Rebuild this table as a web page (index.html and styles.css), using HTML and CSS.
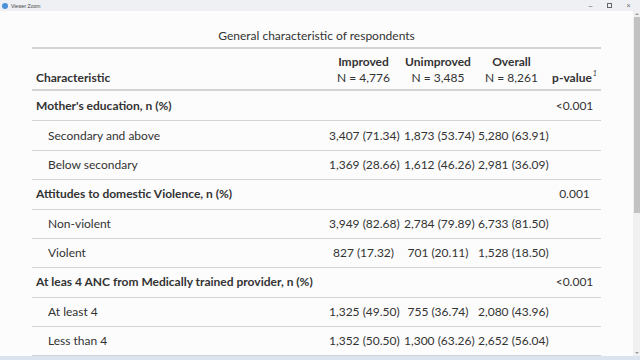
FILE: index.html
```html
<!DOCTYPE html>
<html>
<head>
<meta charset="utf-8">
<link rel="stylesheet" href="styles.css">
</head>
<body>
<div class="window">
  <div class="titlebar">
    <span class="app-icon"></span>
    <span class="app-title">Viewer Zoom</span>
    <span class="spacer"></span>
    <span class="ctrl">&#8211;</span>
    <span class="ctrl restore"></span>
    <span class="ctrl">&#215;</span>
  </div>
  <div class="main">
    <div class="content">
      <table class="gt">
        <caption>General characteristic of respondents</caption>
        <colgroup>
          <col class="c-label">
          <col class="c-imp">
          <col class="c-unimp">
          <col class="c-all">
          <col class="c-p">
        </colgroup>
        <thead>
          <tr>
            <th class="left">Characteristic</th>
            <th>Improved<br><span class="n">N = 4,776</span></th>
            <th>Unimproved<br><span class="n">N = 3,485</span></th>
            <th>Overall<br><span class="n">N = 8,261</span></th>
            <th>p-value<sup class="mark">1</sup></th>
          </tr>
        </thead>
        <tbody>
          <tr class="grp"><td class="left">Mother's education, n (%)</td><td></td><td></td><td></td><td>&lt;0.001</td></tr>
          <tr><td class="left sub">Secondary and above</td><td>3,407 (71.34)</td><td>1,873 (53.74)</td><td>5,280 (63.91)</td><td></td></tr>
          <tr><td class="left sub">Below secondary</td><td>1,369 (28.66)</td><td>1,612 (46.26)</td><td>2,981 (36.09)</td><td></td></tr>
          <tr class="grp"><td class="left">Attitudes to domestic Violence, n (%)</td><td></td><td></td><td></td><td>0.001</td></tr>
          <tr><td class="left sub">Non-violent</td><td>3,949 (82.68)</td><td>2,784 (79.89)</td><td>6,733 (81.50)</td><td></td></tr>
          <tr><td class="left sub">Violent</td><td>827 (17.32)</td><td>701 (20.11)</td><td>1,528 (18.50)</td><td></td></tr>
          <tr class="grp"><td class="left">At leas 4 ANC from Medically trained provider, n (%)</td><td></td><td></td><td></td><td>&lt;0.001</td></tr>
          <tr><td class="left sub">At least 4</td><td>1,325 (49.50)</td><td>755 (36.74)</td><td>2,080 (43.96)</td><td></td></tr>
          <tr><td class="left sub">Less than 4</td><td>1,352 (50.50)</td><td>1,300 (63.26)</td><td>2,652 (56.04)</td><td></td></tr>
        </tbody>
      </table>
    </div>
    <div class="scrollbar">
      <span class="arrow up"></span>
      <span class="thumb"></span>
      <span class="track-rest"></span>
      <span class="arrow down"></span>
    </div>
  </div>
  <div class="taskbar"></div>
</div>
</body>
</html>
```
FILE: styles.css
```css
html, body {
  margin: 0;
  padding: 0;
}
body {
  width: 640px;
  height: 360px;
  overflow: hidden;
  font-family: "Lato", "Open Sans", sans-serif;
  color: #333333;
  background: #fcfcfc;
}
.window {
  display: flex;
  flex-direction: column;
  height: 360px;
}
.titlebar {
  height: 11px;
  flex: 0 0 11px;
  display: flex;
  align-items: center;
  background: #eef0f3;
  padding: 0 2px 0 2px;
  box-sizing: border-box;
}
.app-icon {
  width: 6px;
  height: 6px;
  border-radius: 50%;
  background: #4a8fd9;
  margin-right: 3px;
}
.app-title {
  font-family: "Liberation Sans", sans-serif;
  font-size: 5px;
  color: #444;
}
.spacer { flex: 1; }
.ctrl {
  font-family: "Liberation Sans", sans-serif;
  font-size: 7px;
  color: #666;
  width: 19px;
  text-align: center;
  line-height: 11px;
}
.restore {
  position: relative;
  height: 11px;
}
.restore::after {
  content: "";
  position: absolute;
  left: 7px;
  top: 3px;
  width: 3px;
  height: 3px;
  border: 1px solid #666;
}
.main {
  flex: 1;
  display: flex;
  min-height: 0;
}
.content {
  flex: 1;
  background: #fcfcfc;
  padding-top: 17px;
}
.scrollbar {
  width: 7px;
  flex: 0 0 7px;
  display: flex;
  flex-direction: column;
  background: #f0f0f0;
}
.arrow {
  height: 6px;
  flex: 0 0 6px;
  display: flex;
  justify-content: center;
  align-items: center;
}
.arrow::after {
  content: "";
  border-left: 2px solid transparent;
  border-right: 2px solid transparent;
}
.arrow.up::after { border-bottom: 2px solid #9a9a9a; }
.arrow.down::after { border-top: 2px solid #9a9a9a; }
.thumb {
  height: 196px;
  flex: 0 0 196px;
  background: #c2c2c2;
  margin-left: 1px;
}
.track-rest { flex: 1; }
.taskbar {
  height: 4px;
  flex: 0 0 4px;
  background: #dbe3ee;
}

/* table */
.gt {
  width: 569px;
  margin: 0 auto;
  border-collapse: collapse;
  table-layout: fixed;
  font-size: 12px;
  line-height: 16px;
}
.gt caption {
  font-size: 12px;
  line-height: 16px;
  padding-bottom: 3px;
  color: #333;
}
.c-label { width: 294px; }
.c-imp { width: 75px; }
.c-unimp { width: 74px; }
.c-all { width: 73px; }
.c-p { width: 53px; }
.gt thead th {
  font-weight: 700;
  vertical-align: bottom;
  text-align: center;
  padding: 5px 3px 3px;
  border-top: 2px solid #d3d3d3;
  border-bottom: 2px solid #d3d3d3;
  white-space: nowrap;
  color: #333;
}
.gt thead .n {
  font-weight: 400;
}
.gt th.left, .gt td.left {
  text-align: left;
  padding-left: 4px;
}
.mark {
  font-style: italic;
  font-weight: 400;
  font-size: 7px;
  vertical-align: 6px;
  line-height: 0;
  margin-left: 1px;
}
.gt td {
  padding: 6.2px 3px;
  text-align: center;
  white-space: nowrap;
  border-top: 1px solid #d3d3d3;
  color: #333;
}
.gt tbody tr:first-child td {
  border-top: none;
  padding-top: 7.2px;
}
.gt tbody tr:last-child td { border-bottom: 1px solid #d3d3d3; }
.gt tr.grp td.left { font-weight: 700; }
.gt td.sub { padding-left: 16px; }
```
